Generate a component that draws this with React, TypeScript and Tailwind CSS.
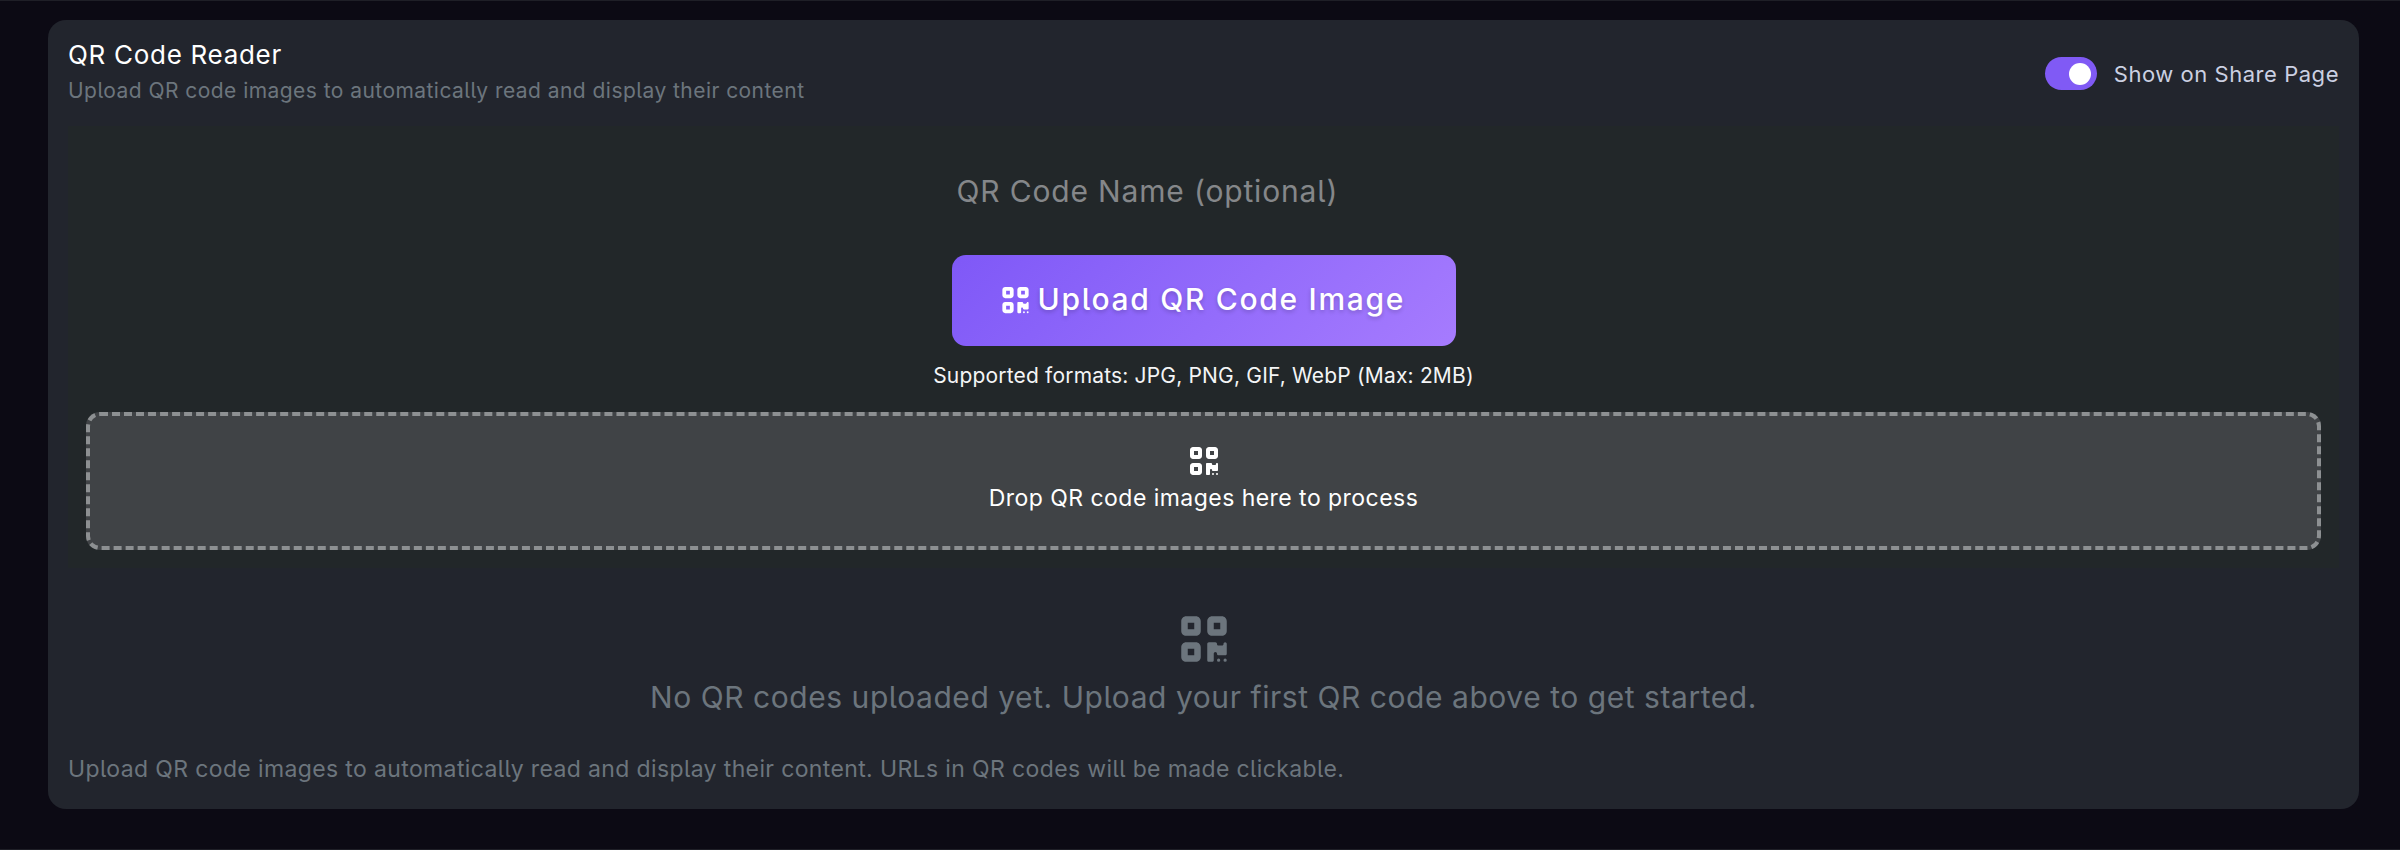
import React, { useState } from "react";
import { FaQrcode } from "react-icons/fa6";

export default function App() {
  const [shared, setShared] = useState(true);
  const [name, setName] = useState("");

  return (
    <div className="h-[850px] border-y border-[#1f1f27] bg-[#0c0a14] pt-[19px] pr-[41px] pl-12 font-['Inter',sans-serif] [font-feature-settings:'cv05']">
      <section className="flex h-[789px] flex-col rounded-[18px] bg-[#22252d] px-5 pt-[18px] whitespace-nowrap">
        <header className="flex h-[66px] items-center justify-between">
          <div className="mt-px">
            <h2 className="text-[26px] leading-8 tracking-[0.7px] text-white">
              QR Code Reader
            </h2>
            <p className="mt-1.5 text-[21px] leading-7 tracking-[0.45px] text-[#6c757d]">
              Upload QR code images to automatically read and display their
              content
            </p>
          </div>
          <div className="mt-[5px] flex items-center gap-[17px]">
            <button
              role="switch"
              aria-checked={shared}
              onClick={() => setShared(!shared)}
              className="flex h-[33px] w-[52px] items-center justify-end rounded-full bg-[#805af5] pr-1.5"
            >
              <span className="size-[22px] rounded-full bg-white" />
            </button>
            <span className="text-[22px] leading-8 tracking-[0.53px] text-[#cbd0e2]">
              Show on Share Page
            </span>
          </div>
        </header>

        <div className="mt-[22px] flex h-[442px] flex-col items-center bg-[#222729] px-[18px] pt-[45px]">
          <input
            value={name}
            onChange={(e) => setName(e.target.value)}
            placeholder="QR Code Name (optional)"
            className="h-10 w-[504px] px-[5px] text-[30px] tracking-[0.84px] text-white outline-none placeholder:text-[#85878a]"
          />
          <button className="mt-11 flex h-[91px] w-[504px] shrink-0 items-center gap-[9px] rounded-[14px] bg-linear-135 from-[#7f58f7] to-[#a67bfe] pb-0.5 pl-[50px] text-[30px] font-medium text-white [text-shadow:0_2px_4px_rgba(0,0,0,0.2)]">
            <FaQrcode className="h-[30px] w-[27px]" />
            <span className="tracking-[1.7px]">Upload QR Code Image</span>
          </button>
          <p className="mt-[15px] text-[21px] leading-[30px] tracking-[0.18px] text-[#f4f5f6]">
            Supported formats: JPG, PNG, GIF, WebP (Max: 2MB)
          </p>
          <div className="mt-[21px] flex h-[138px] w-full flex-col items-center rounded-[14px] border-4 border-dashed border-[#8d9092] bg-[#404346] pt-[29px] text-white">
            <FaQrcode className="h-8 w-7" />
            <p className="mt-[6px] text-[23px] leading-[30px] tracking-[0.46px]">
              Drop QR code images here to process
            </p>
          </div>
        </div>

        <div className="mt-[45px] flex flex-col items-center text-[#6c757d]">
          <FaQrcode className="h-[52px] w-[46px]" />
          <p className="mt-3 text-[30px] leading-10 tracking-[0.55px]">
            No QR codes uploaded yet. Upload your first QR code above to get
            started.
          </p>
        </div>
        <p className="mt-[37px] text-[23px] leading-[30px] tracking-[0.37px] text-[#6c757d]">
          Upload QR code images to automatically read and display their
          content. URLs in QR codes will be made clickable.
        </p>
      </section>
    </div>
  );
}
